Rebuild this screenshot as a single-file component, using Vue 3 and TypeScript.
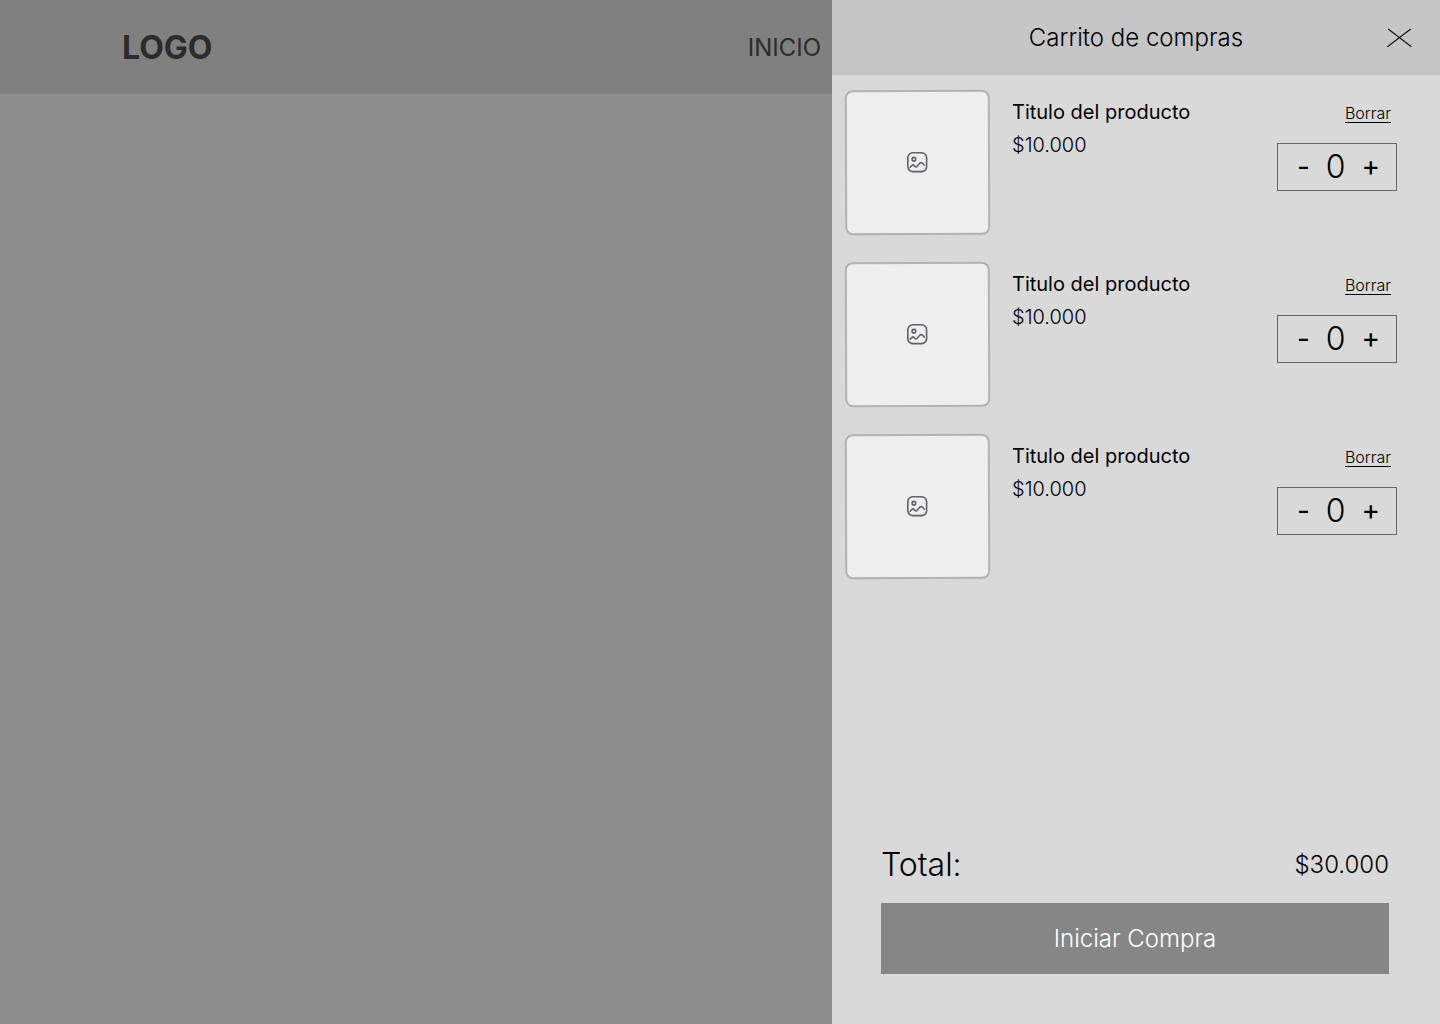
<script setup lang="ts">
import { computed, ref } from 'vue'

interface CartItem {
  id: number
  title: string
  price: string
  quantity: number
}

const items = ref<CartItem[]>([
  { id: 1, title: 'Titulo del producto', price: '$10.000', quantity: 0 },
  { id: 2, title: 'Titulo del producto', price: '$10.000', quantity: 0 },
  { id: 3, title: 'Titulo del producto', price: '$10.000', quantity: 0 },
])

const open = ref(true)
const total = computed(() => `$${items.value.length * 10}.000`)

function remove(id: number) {
  items.value = items.value.filter((item) => item.id !== id)
}

function change(item: CartItem, step: number) {
  item.quantity = Math.max(0, item.quantity + step)
}
</script>

<template>
  <div class="page">
    <div class="store">
      <header class="store-header">
        <a class="logo" href="#">LOGO</a>
        <nav><a class="nav-link" href="#">INICIO</a></nav>
      </header>
    </div>

    <aside v-if="open" class="drawer" aria-labelledby="cart-title">
      <header class="drawer-header">
        <h2 id="cart-title" class="drawer-title">Carrito de compras</h2>
        <button class="close" type="button" aria-label="Cerrar" @click="open = false">
          <svg width="26" height="20" viewBox="0 0 26 20" fill="none" stroke="#111" stroke-width="1.1">
            <path d="M2.2 1 25.4 18.7M24.8 1 1.4 18.7" />
          </svg>
        </button>
      </header>

      <ul class="items">
        <li v-for="item in items" :key="item.id" class="item">
          <div class="thumb">
            <svg width="24" height="24" viewBox="0 0 24 24" fill="none" stroke="#5f6068" stroke-width="1.6" stroke-linecap="round" stroke-linejoin="round">
              <rect x="2.8" y="2.8" width="18.8" height="18.8" rx="5" />
              <circle cx="8.9" cy="9.2" r="1.8" />
              <path d="M5.2 17.2c1.2-1.2 1.7-2.3 2.7-2.3 1.4 0 1.7 2 3.1 2 2 0 2.7-4.3 5.1-4.3 1.4 0 2.1 1.4 3.1 2.5" />
            </svg>
          </div>
          <div class="info">
            <h3 class="item-title">{{ item.title }}</h3>
            <p class="item-price">{{ item.price }}</p>
          </div>
          <div class="actions">
            <button class="remove" type="button" @click="remove(item.id)">Borrar</button>
            <div class="stepper">
              <button class="step" type="button" aria-label="Restar" @click="change(item, -1)">-</button>
              <output class="quantity">{{ item.quantity }}</output>
              <button class="step" type="button" aria-label="Sumar" @click="change(item, 1)">+</button>
            </div>
          </div>
        </li>
      </ul>

      <footer class="summary">
        <div class="total">
          <span class="total-label">Total:</span>
          <span class="total-value">{{ total }}</span>
        </div>
        <button class="checkout" type="button">Iniciar Compra</button>
      </footer>
    </aside>
  </div>
</template>

<style scoped>
.page {
  display: flex;
  min-height: 100vh;
  background: #8e8e8e;
  color: #000;
  font-family: Inter, sans-serif;
  font-weight: 300;
}

button {
  padding: 0;
  border: 0;
  background: none;
  color: inherit;
  font: inherit;
  cursor: pointer;
}

.store {
  flex: 1;
  min-width: 0;
}

.store-header {
  display: flex;
  align-items: center;
  justify-content: space-between;
  height: 94px;
  padding: 0 11px 0 122px;
  background: #808080;
}

.logo,
.nav-link {
  color: #2c2c2c;
  text-decoration: none;
}

.logo {
  font-size: 32px;
  font-weight: 700;
}

.nav-link {
  font-size: 24px;
  font-weight: 400;
}

.drawer {
  display: flex;
  flex-direction: column;
  width: 608px;
  max-width: 100%;
  background: #d9d9d9;
}

.drawer-header {
  display: grid;
  grid-template-columns: 26px 1fr 26px;
  align-items: center;
  height: 75px;
  padding: 0 28px;
  background: #c6c6c6;
}

.drawer-title {
  grid-column: 2;
  margin: 0;
  font-size: 24px;
  font-weight: 300;
  text-align: center;
}

.close {
  display: flex;
}

.items {
  display: flex;
  flex-direction: column;
  gap: 27px;
  margin: 0;
  padding: 15px 43px 0 13px;
  list-style: none;
}

.item {
  display: flex;
}

.thumb {
  display: flex;
  align-items: center;
  justify-content: center;
  box-sizing: border-box;
  width: 145px;
  height: 145px;
  padding: 0 2px 2px 0;
  border: 2px solid #b2b2b7;
  border-radius: 8px;
  background: #eee;
  transform: rotate(-0.2deg);
}

.info {
  flex: 1;
  padding: 10px 0 0 22px;
}

.item-title,
.item-price {
  margin: 0;
  font-size: 20px;
  line-height: 24px;
}

.item-title {
  font-weight: 400;
}

.item-price {
  margin-top: 9px;
}

.actions {
  display: flex;
  flex-direction: column;
  align-items: flex-end;
  gap: 20px;
  padding-top: 14px;
}

.remove {
  margin-right: 6px;
  border-bottom: 1px solid #000;
  font-size: 16px;
  line-height: 18px;
}

.stepper {
  display: flex;
  align-items: center;
  justify-content: space-between;
  box-sizing: border-box;
  width: 120px;
  height: 48px;
  padding: 0 16px 2px 19px;
  border: 1px solid #666;
}

.step {
  padding-top: 3px;
  font-size: 28px;
  font-weight: 400;
  font-feature-settings: 'case';
}

.quantity {
  font-size: 32px;
}

.summary {
  margin-top: auto;
  padding: 0 51px 50px 49px;
}

.total {
  display: flex;
  align-items: center;
  justify-content: space-between;
  height: 77px;
}

.total-label {
  font-size: 32px;
}

.total-value {
  font-size: 24px;
}

.checkout {
  width: 100%;
  height: 71px;
  background: #868686;
  color: #fff;
  font-size: 24px;
}
</style>

<style>
body {
  margin: 0;
}
</style>
